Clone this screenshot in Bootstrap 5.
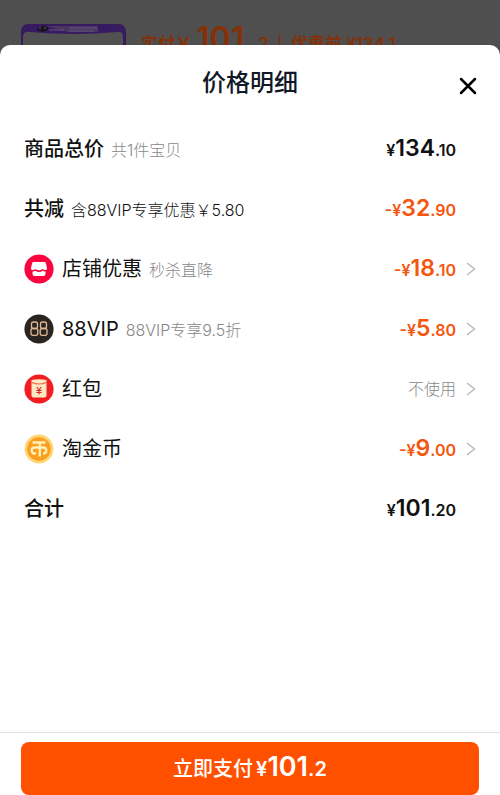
<!DOCTYPE html>
<html lang="zh-CN">
<head>
<meta charset="utf-8">
<meta name="viewport" content="width=device-width, initial-scale=1">
<title>价格明细</title>
<link href="https://cdn.jsdelivr.net/npm/bootstrap@5.3.0/dist/css/bootstrap.min.css" rel="stylesheet">
<style>
body { background: #4f4f4f; color: #111; font-family: Inter, "Noto Sans CJK SC", sans-serif; }
.order-peek { height: 45px; padding: 24px 21px 0; }
.order-thumb { width: 105px; height: 60px; flex: none; }
.order-sum { margin-left: 15px; color: #853009; font-size: 17px; line-height: 30px; font-weight: 600; }
.order-sum .amount-big { font-size: 32px; margin-left: 4px; }
.sheet { background: #fff; border-radius: 10px 10px 0 0; }
.sheet-head { height: 74px; }
.sheet-head h1 { font-size: 24px; line-height: 36px; font-weight: 500; color: #111827; }
.btn-x { top: 31px; right: 22px; width: 20px; height: 20px; }
.price-row { height: 60px; padding: 0 24px; color: inherit; }
.price-row .name { font-size: 20px; line-height: 30px; font-weight: 400; }
.price-row .name.strong { font-weight: 500; }
.price-row .note { font-size: 16px; line-height: 30px; font-weight: 300; color: #888; margin: 2px 0 0 7px; }
.price-row .note.dark { color: #111; }
.row-icon { width: 30px; height: 30px; margin-right: 8px; flex: none; }
.chev { width: 10px; height: 16px; margin-left: 10px; flex: none; }
.amount { font-size: 16px; line-height: 30px; font-weight: 600; white-space: nowrap; }
.amount b { font-size: 23px; font-weight: 600; }
.no-chev { margin-right: 20px; }
.orange { color: #f4560f; }
.unused { font-size: 16px; font-weight: 300; color: #888; }
.pay-bar { border-top: 1px solid #e1e1e1; padding: 9px 21px 0; }
.btn-pay { --bs-btn-bg: #ff5000; --bs-btn-color: #fff; --bs-btn-hover-bg: #eb4a00; --bs-btn-hover-color: #fff; --bs-btn-active-bg: #d94400; --bs-btn-border-radius: 8px; height: 53px; font-size: 20px; font-weight: 500; line-height: 36px; }
.btn-pay .amount { font-size: 20px; margin-left: 3px; }
.btn-pay .amount b { font-size: 27px; }
</style>
<script src="https://cdn.jsdelivr.net/npm/bootstrap@5.3.0/dist/js/bootstrap.bundle.min.js" defer></script>
</head>
<body class="d-flex flex-column min-vh-100">
<div class="order-peek d-flex overflow-hidden" aria-hidden="true">
  <svg class="order-thumb" viewBox="0 0 105 60">
    <rect width="105" height="60" rx="7" fill="#371a60"/>
    <path d="M2 60V13q0-6 7-5 43 4 87 0 6-1 6 5v47z" fill="#515151"/>
    <path d="M25 2h52v6H47z" fill="#49355f"/>
    <path d="M16 6q0-3 4-3 2-3 5 0 3 0 2 3l-5 2z" fill="#17141c"/>
    <path d="M18 4h2m3 0h2M28 6h15m5-2h28m-28 3h25" stroke="#67577c" stroke-width="1"/>
  </svg>
  <div class="order-sum text-nowrap">实付￥<span class="amount-big">101</span>&nbsp; .2 <span class="fw-normal mx-1">|</span> 优惠前 ¥134.1</div>
</div>
<main class="sheet flex-grow-1 d-flex flex-column">
  <header class="sheet-head position-relative text-center pt-1">
    <h1 class="mb-0 mt-3">价格明细</h1>
    <button type="button" class="btn-x btn p-0 border-0 position-absolute d-flex" aria-label="关闭">
      <svg viewBox="0 0 20 20" width="20" height="20"><path d="M3 3l14 14M17 3L3 17" stroke="#000" stroke-width="2.5" stroke-linecap="round"/></svg>
    </button>
  </header>
  <div class="flex-grow-1">
    <div class="price-row d-flex align-items-center">
      <span class="name strong">商品总价</span><span class="note">共1件宝贝</span>
      <span class="amount ms-auto no-chev">¥<b>134</b>.10</span>
    </div>
    <div class="price-row d-flex align-items-center">
      <span class="name strong">共减</span><span class="note dark">含88VIP专享优惠￥5.80</span>
      <span class="amount orange ms-auto no-chev">-¥<b>32</b>.90</span>
    </div>
    <a href="#shop" class="price-row d-flex align-items-center text-decoration-none">
      <svg class="row-icon" viewBox="0 0 30 30" aria-hidden="true"><circle cx="15" cy="15" r="14.600" fill="#f90540"/><path d="M9.500 8h11q1 0 1.300 1l1.200 5q.1 2-1.200 2-1.800.2-3.300-1-1.500 1.200-3.500 1.200t-3.500-1.200q-1.500 1.200-3.300 1-1.300 0-1.200-2l1.200-5q.3-1 1.300-1z" fill="#fff"/><path d="M8.500 17.500q1.500.2 2.900-.7 1.600 1.200 3.600 1.200t3.600-1.200q1.400.9 2.900.7v2.500q0 2-2 2h-9q-2 0-2-2z" fill="#fff"/></svg>
      <span class="name">店铺优惠</span><span class="note">秒杀直降</span>
      <span class="amount orange ms-auto">-¥<b>18</b>.10</span>
      <svg class="chev" viewBox="0 0 10 16" aria-hidden="true"><path d="M1 2l7.500 6L1 14" fill="none" stroke="#bbb" stroke-width="1.500"/></svg>
    </a>
    <a href="#vip" class="price-row d-flex align-items-center text-decoration-none">
      <svg class="row-icon" viewBox="0 0 30 30" aria-hidden="true"><circle cx="15" cy="15" r="14.600" fill="#2b2522"/><g fill="none" stroke="#dfb994" stroke-width="1.300"><rect x="7.500" y="8" width="6" height="6.500" rx="2"/><rect x="7" y="14.500" width="6.800" height="6.800" rx="2"/><rect x="16.500" y="8" width="6" height="6.500" rx="2"/><rect x="16.200" y="14.500" width="6.800" height="6.800" rx="2"/></g></svg>
      <span class="name">88VIP</span><span class="note">88VIP专享9.5折</span>
      <span class="amount orange ms-auto">-¥<b>5</b>.80</span>
      <svg class="chev" viewBox="0 0 10 16" aria-hidden="true"><path d="M1 2l7.500 6L1 14" fill="none" stroke="#bbb" stroke-width="1.500"/></svg>
    </a>
    <a href="#hongbao" class="price-row d-flex align-items-center text-decoration-none">
      <svg class="row-icon" viewBox="0 0 30 30" aria-hidden="true"><circle cx="15" cy="15" r="14.600" fill="#f01e22"/><path d="M7.500 6q7.500-1.500 15 0v15.500q0 2-2 2h-11q-2 0-2-2z" fill="#ffe8c4"/><path d="M7.500 8.200q7.500 3.600 15 0" fill="none" stroke="#ef6a4a" stroke-width="1.200"/><path d="M12.800 13l2.200 3 2.200-3M15 16v4.500M12.300 16.500h5.400M12.300 18.500h5.400" fill="none" stroke="#df2b24" stroke-width="1.200"/></svg>
      <span class="name">红包</span>
      <span class="unused ms-auto">不使用</span>
      <svg class="chev" viewBox="0 0 10 16" aria-hidden="true"><path d="M1 2l7.500 6L1 14" fill="none" stroke="#bbb" stroke-width="1.500"/></svg>
    </a>
    <a href="#coin" class="price-row d-flex align-items-center text-decoration-none">
      <svg class="row-icon" viewBox="0 0 30 30" aria-hidden="true"><circle cx="15" cy="15" r="14.400" fill="#ffd575"/><circle cx="15" cy="15" r="11.800" fill="#fb9f20"/><path d="M8.500 8.500h13M15.800 8.500v14M12 19.500h-1.500q-2.800 0-2.800-3t2.800-3H19q3.300 0 3.300 3t-3.300 3" fill="none" stroke="#fff0b5" stroke-width="2.300" stroke-linejoin="round"/></svg>
      <span class="name">淘金币</span>
      <span class="amount orange ms-auto">-¥<b>9</b>.00</span>
      <svg class="chev" viewBox="0 0 10 16" aria-hidden="true"><path d="M1 2l7.500 6L1 14" fill="none" stroke="#bbb" stroke-width="1.500"/></svg>
    </a>
    <div class="price-row d-flex align-items-center">
      <span class="name strong">合计</span>
      <span class="amount ms-auto no-chev">¥<b>101</b>.20</span>
    </div>
  </div>
  <footer class="pay-bar">
    <button type="button" class="btn btn-pay border-0 w-100 p-0">立即支付<span class="amount">¥<b>101</b>.2</span></button>
  </footer>
</main>
</body>
</html>
